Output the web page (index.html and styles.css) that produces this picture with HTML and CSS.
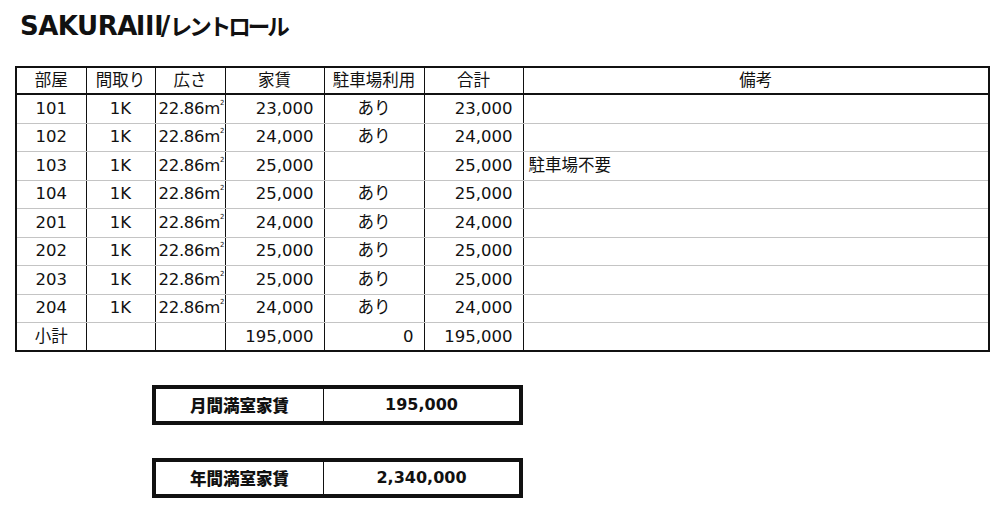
FILE: index.html
```html
<!DOCTYPE html>
<html lang="ja">
<head>
<meta charset="utf-8">
<title>SAKURAⅢ/レントロール</title>
<link rel="stylesheet" href="styles.css">
</head>
<body>
<h1 class="title">SAKURA<span class="title-num">Ⅲ</span>/<span class="title-jp">レントロール</span></h1>

<table class="roll">
  <colgroup>
    <col class="c-room"><col class="c-plan"><col class="c-area"><col class="c-rent"><col class="c-park"><col class="c-total"><col class="c-note">
  </colgroup>
  <thead>
    <tr>
      <th>部屋</th><th>間取り</th><th>広さ</th><th>家賃</th><th>駐車場利用</th><th>合計</th><th>備考</th>
    </tr>
  </thead>
  <tbody>
    <tr><td class="ctr">101</td><td class="ctr">1K</td><td class="area">22.86m<span class="sq">2</span></td><td class="num">23,000</td><td class="ctr">あり</td><td class="num">23,000</td><td class="note"></td></tr>
    <tr><td class="ctr">102</td><td class="ctr">1K</td><td class="area">22.86m<span class="sq">2</span></td><td class="num">24,000</td><td class="ctr">あり</td><td class="num">24,000</td><td class="note"></td></tr>
    <tr><td class="ctr">103</td><td class="ctr">1K</td><td class="area">22.86m<span class="sq">2</span></td><td class="num">25,000</td><td class="ctr"></td><td class="num">25,000</td><td class="note">駐車場不要</td></tr>
    <tr><td class="ctr">104</td><td class="ctr">1K</td><td class="area">22.86m<span class="sq">2</span></td><td class="num">25,000</td><td class="ctr">あり</td><td class="num">25,000</td><td class="note"></td></tr>
    <tr><td class="ctr">201</td><td class="ctr">1K</td><td class="area">22.86m<span class="sq">2</span></td><td class="num">24,000</td><td class="ctr">あり</td><td class="num">24,000</td><td class="note"></td></tr>
    <tr><td class="ctr">202</td><td class="ctr">1K</td><td class="area">22.86m<span class="sq">2</span></td><td class="num">25,000</td><td class="ctr">あり</td><td class="num">25,000</td><td class="note"></td></tr>
    <tr><td class="ctr">203</td><td class="ctr">1K</td><td class="area">22.86m<span class="sq">2</span></td><td class="num">25,000</td><td class="ctr">あり</td><td class="num">25,000</td><td class="note"></td></tr>
    <tr><td class="ctr">204</td><td class="ctr">1K</td><td class="area">22.86m<span class="sq">2</span></td><td class="num">24,000</td><td class="ctr">あり</td><td class="num">24,000</td><td class="note"></td></tr>
  </tbody>
  <tfoot>
    <tr><td class="ctr">小計</td><td></td><td></td><td class="num">195,000</td><td class="num">0</td><td class="num">195,000</td><td class="note"></td></tr>
  </tfoot>
</table>

<div class="totals">
  <div class="total-box">
    <div class="total-label">月間満室家賃</div>
    <div class="total-value">195,000</div>
  </div>
  <div class="total-box">
    <div class="total-label">年間満室家賃</div>
    <div class="total-value">2,340,000</div>
  </div>
</div>
</body>
</html>
```

FILE: styles.css
```css
html, body {
  margin: 0;
  padding: 0;
  background: #fff;
  color: #111;
}

body {
  font-family: "DejaVu Sans", "Noto Sans CJK JP", sans-serif;
}

.title {
  margin: 9px 0 0 20px;
  font-size: 26px;
  line-height: 30px;
  height: 30px;
  font-weight: bold;
  white-space: nowrap;
  letter-spacing: -0.5px;
}

.title-num {
  font-family: "Noto Sans CJK JP", sans-serif;
  font-size: 26px;
  font-weight: 900;
  letter-spacing: -2px;
}

.title-jp {
  font-family: "Noto Sans CJK JP", sans-serif;
  font-size: 22.5px;
  font-weight: bold;
  letter-spacing: -3px;
}

.roll {
  margin: 27px 0 0 15px;
  border-collapse: collapse;
  table-layout: fixed;
  width: 973px;
  font-size: 16.5px;
  border: 2px solid #111;
}

.c-room { width: 70px; }
.c-plan { width: 69px; }
.c-area { width: 70px; }
.c-rent { width: 99px; }
.c-park { width: 100px; }
.c-total { width: 99px; }
.c-note { width: 466px; }

.roll th {
  font-weight: normal;
  height: 25px;
  padding: 0;
  text-align: center;
  border: 1px solid #111;
  border-bottom: 2px solid #111;
  font-size: 16.5px;
  line-height: 20px;
}

.roll td {
  height: 27.5px;
  padding: 0;
  line-height: 20px;
  border-left: 1px solid #111;
  border-right: 1px solid #111;
  border-top: 1px solid #c4c4c4;
  border-bottom: 1px solid #c4c4c4;
  white-space: nowrap;
}

.roll tfoot td {
  border-top: 1px solid #111;
  border-bottom: 2px solid #111;
  height: 27px;
}

.ctr { text-align: center; }
.num { text-align: right; padding-right: 10px !important; }
.area { text-align: left; padding-left: 3px !important; letter-spacing: -0.3px; }
.note { text-align: left; padding-left: 5px !important; }

.sq {
  font-size: 7px;
  line-height: 0;
  vertical-align: 9px;
  letter-spacing: 0;
}

.totals {
  margin: 33px 0 0 152px;
  display: flex;
  flex-direction: column;
  gap: 33px;
}

.total-box {
  width: 371px;
  height: 40px;
  box-sizing: border-box;
  border: 4px solid #111;
  display: grid;
  grid-template-columns: 167px 1fr;
  font-weight: bold;
  font-size: 16px;
}

.total-label,
.total-value {
  line-height: 32px;
  text-align: center;
}

.total-label {
  font-family: "Noto Sans CJK JP", sans-serif;
  font-size: 16.5px;
  font-weight: 900;
}

.total-value {
  border-left: 1px solid #111;
}
```
